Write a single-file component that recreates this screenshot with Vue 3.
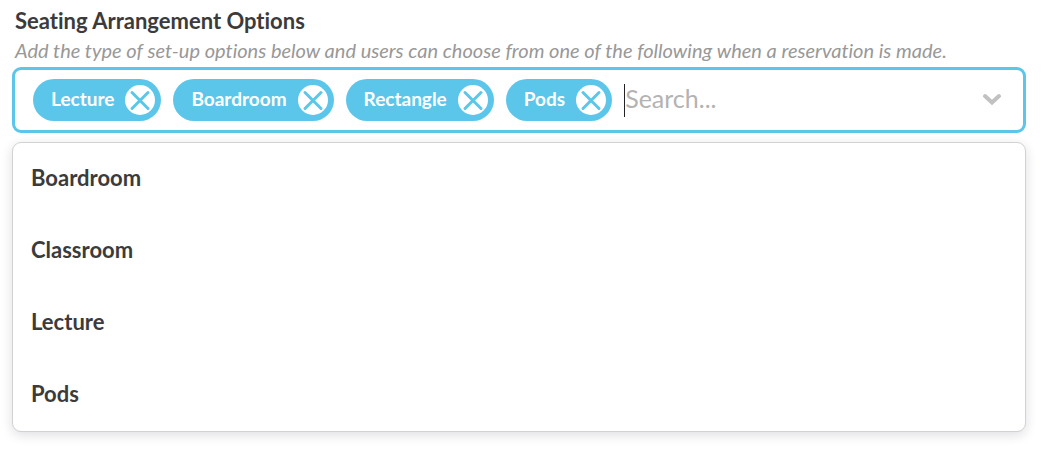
<script setup>
import { ref } from 'vue'

const selected = ref(['Lecture', 'Boardroom', 'Rectangle', 'Pods'])
const options = ['Boardroom', 'Classroom', 'Lecture', 'Pods']
const query = ref('')

function remove(name) {
  selected.value = selected.value.filter((item) => item !== name)
}

function add(name) {
  if (!selected.value.includes(name)) selected.value.push(name)
}
</script>

<template>
  <main class="field">
    <label class="title" for="seating-search">Seating Arrangement Options</label>
    <p id="seating-hint" class="hint">
      Add the type of set-up options below and users can choose from one of the following when a reservation is made.
    </p>

    <div class="control">
      <ul class="chips">
        <li v-for="name in selected" :key="name" class="chip">
          <span class="chip-label">{{ name }}</span>
          <button type="button" class="remove" :aria-label="`Remove ${name}`" @click="remove(name)">
            <svg viewBox="0 0 30 30" width="30" height="30" aria-hidden="true">
              <path d="M7 7.5L23 23.5M23 7.5L7 23.5" />
            </svg>
          </button>
        </li>
      </ul>
      <input
        id="seating-search"
        v-model="query"
        class="search"
        type="text"
        placeholder="Search..."
        aria-describedby="seating-hint"
        autocomplete="off"
      />
      <button type="button" class="toggle" aria-label="Toggle options">
        <svg viewBox="0 0 20 14" width="20" height="14" aria-hidden="true">
          <path d="M3 3L10 9.5L17 3" />
        </svg>
      </button>
    </div>

    <ul class="menu">
      <li v-for="name in options" :key="name">
        <button type="button" class="option" @click="add(name)">{{ name }}</button>
      </li>
    </ul>
  </main>
</template>

<style>
body {
  margin: 0;
  background: #fff;
}
</style>

<style scoped>
.field {
  padding: 8px 25px 18px 12px;
  color: #3b3b3b;
  font-family: Lato, "Open Sans", sans-serif;
  font-variant-ligatures: none;
}

.title {
  display: block;
  padding-left: 3px;
  font-size: 22px;
  font-weight: 700;
  line-height: 26px;
}

.hint {
  margin: 4px 0;
  padding-left: 3px;
  color: #989898;
  font-size: 20px;
  font-style: italic;
  line-height: 25px;
  white-space: nowrap;
}

.control {
  display: flex;
  align-items: center;
  gap: 12px;
  padding: 9px 18px;
  border: 3px solid #5bc6ea;
  border-radius: 9px;
  background: #fff;
}

ul {
  margin: 0;
  padding: 0;
  list-style: none;
}

.chips {
  display: flex;
  gap: 12px;
}

.chip {
  display: flex;
  align-items: center;
  gap: 11px;
  padding: 6px 6px 6px 18px;
  border-radius: 21px;
  background: #5bc6ea;
  color: #fff;
  font-size: 19px;
  font-weight: 700;
  line-height: 28px;
}

.chip-label {
  padding-bottom: 2px;
}

button {
  padding: 0;
  border: 0;
  background: none;
  color: inherit;
  font: inherit;
  font-variant-ligatures: none;
  cursor: pointer;
}

.remove {
  width: 30px;
  height: 30px;
  border-radius: 50%;
  background: #fff;
}

svg {
  display: block;
  fill: none;
  stroke-linecap: round;
}

.remove svg {
  stroke: #5bc6ea;
  stroke-width: 3;
}

.search {
  flex: 1;
  min-width: 0;
  height: 33px;
  box-sizing: border-box;
  padding: 0 0 4px;
  border: 0;
  border-left: 1px solid #222;
  outline: none;
  background: none;
  color: #3b3b3b;
  font-family: inherit;
  font-size: 25px;
  line-height: 29px;
}

.search::placeholder {
  color: #b3b3b3;
  opacity: 1;
}

.toggle {
  margin-right: 3px;
}

.toggle svg {
  stroke: #c1c1c1;
  stroke-width: 4;
}

.menu {
  margin-top: 9px;
  border: 1px solid #d2d2d4;
  border-radius: 9px;
  background: #fff;
  box-shadow: 0 3px 12px rgba(20, 20, 50, 0.14);
}

.option {
  display: block;
  width: 100%;
  padding: 0 18px 2px;
  font-size: 22px;
  font-weight: 700;
  line-height: 70px;
  text-align: left;
}
</style>
